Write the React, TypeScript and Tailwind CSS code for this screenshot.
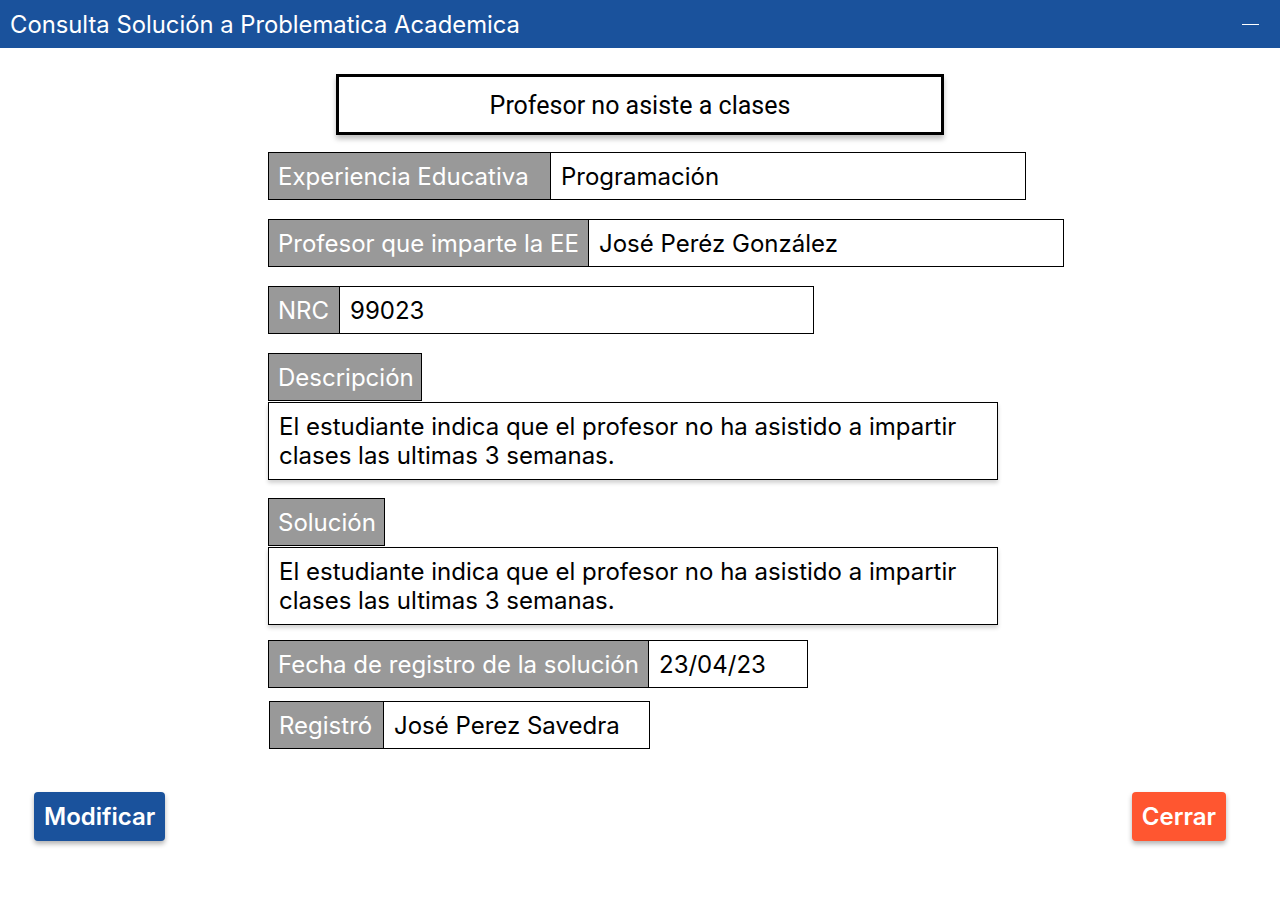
import React from "react";

const font = { fontFamily: "Inter, 'Noto Sans', sans-serif" };

function Campo({ label, value, labelW, valueW, className = "" }: { label: string; value: string; labelW: string; valueW: string; className?: string }) {
  return (
    <div className={`flex h-[48px] ${className}`}>
      <div className={`${labelW} h-full bg-[#999999] border border-black text-white text-[24px] leading-[48px] pl-[9px] whitespace-nowrap`}>
        {label}
      </div>
      <div className={`${valueW} h-full bg-white border border-l-0 border-black text-black text-[24px] leading-[48px] pl-[10px] whitespace-nowrap`}>
        {value}
      </div>
    </div>
  );
}

function Bloque({ label, labelW, texto, className = "" }: { label: string; labelW: string; texto: string; className?: string }) {
  return (
    <div className={`flex flex-col ${className}`}>
      <div className={`${labelW} h-[48px] bg-[#999999] border border-black text-white text-[24px] leading-[48px] pl-[9px]`}>
        {label}
      </div>
      <div className="w-[730px] h-[78px] mt-[1px] bg-white border border-black text-black text-[24px] leading-[29px] pl-[10px] pt-[9px] shadow-[0_3px_4px_rgba(0,0,0,0.18)]">
        {texto}
      </div>
    </div>
  );
}

export default function App() {
  const texto = "El estudiante indica que el profesor no ha asistido a impartir clases las ultimas 3 semanas.";
  return (
    <div className="w-[1280px] h-[900px] bg-white relative" style={font}>
      {/* barra de titulo */}
      <div className="h-[48px] bg-[#1a529c] flex items-center justify-between pl-[10px] pr-[21px]">
        <span className="text-white text-[23.8px] pt-[1px]">Consulta Solución a Problematica Academica</span>
        <span className="block w-[17px] h-[1px] bg-white mt-[1px]" />
      </div>

      <div className="flex flex-col pl-[268px]">
        <div className="ml-[68px] mt-[26px] w-[608px] h-[61px] border-[3px] border-black flex items-center justify-center text-[25px] text-black pt-[2px] shadow-[0_4px_5px_rgba(0,0,0,0.25)]" style={{ fontFamily: "Roboto, 'Liberation Sans', sans-serif" }}>
          Profesor no asiste a clases
        </div>

        <Campo className="mt-[17px]" label="Experiencia Educativa" value="Programación" labelW="w-[283px]" valueW="w-[475px]" />
        <Campo className="mt-[19px]" label="Profesor que imparte la EE" value="José Peréz González" labelW="w-[321px]" valueW="w-[475px]" />
        <Campo className="mt-[19px]" label="NRC" value="99023" labelW="w-[72px]" valueW="w-[474px]" />

        <Bloque className="mt-[19px]" label="Descripción" labelW="w-[154px]" texto={texto} />
        <Bloque className="mt-[18px]" label="Solución" labelW="w-[117px]" texto={texto} />

        <Campo className="mt-[15px]" label="Fecha de registro de la solución" value="23/04/23" labelW="w-[381px]" valueW="w-[159px]" />
        <Campo className="mt-[13px] ml-[1px]" label="Registró" value="José Perez Savedra" labelW="w-[115px]" valueW="w-[266px]" />
      </div>

      <div className="flex justify-between pl-[34px] pr-[54px] mt-[43px]">
        <button className="h-[49px] px-[10px] bg-[#1a529c] text-white text-[24px] font-semibold rounded-[4px] shadow-[0_3px_5px_rgba(0,0,0,0.3)]">
          Modificar
        </button>
        <button className="h-[49px] px-[10px] bg-[#ff5630] text-white text-[24px] font-semibold rounded-[4px] shadow-[0_3px_5px_rgba(0,0,0,0.3)]">
          Cerrar
        </button>
      </div>
    </div>
  );
}
